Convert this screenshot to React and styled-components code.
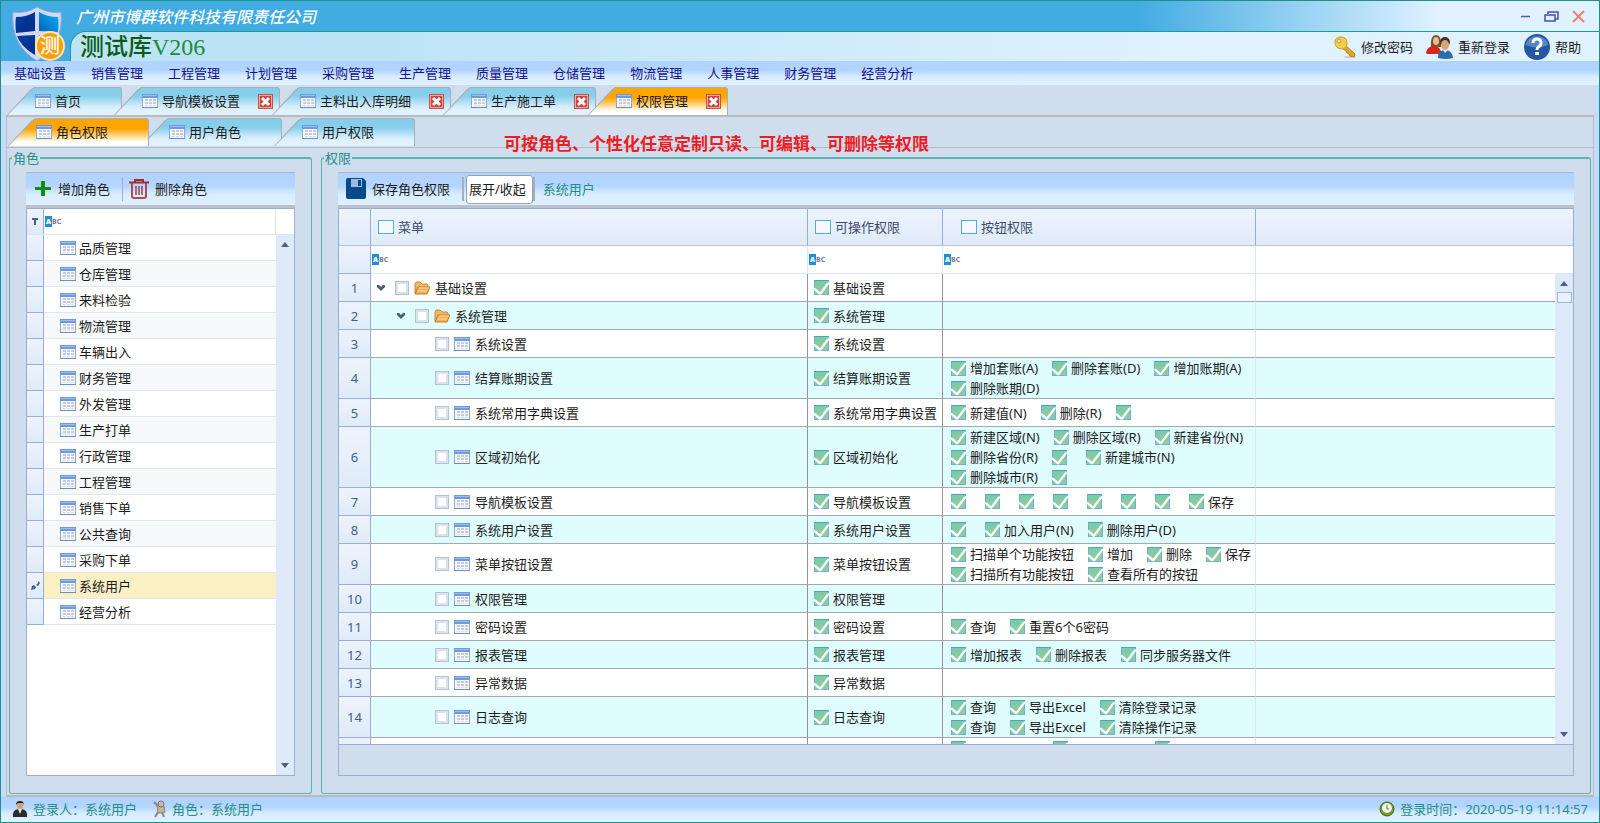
import React from "react";
import styled, { createGlobalStyle, css } from "styled-components";

const menus = [
  "基础设置", "销售管理", "工程管理", "计划管理", "采购管理", "生产管理",
  "质量管理", "仓储管理", "物流管理", "人事管理", "财务管理", "经营分析",
];

const pages = [
  { name: "首页" },
  { name: "导航模板设置", close: true },
  { name: "主料出入库明细", close: true },
  { name: "生产施工单", close: true },
  { name: "权限管理", close: true, active: true },
];

const subPages = [
  { name: "角色权限", active: true },
  { name: "用户角色" },
  { name: "用户权限" },
];

const roles = [
  "品质管理", "仓库管理", "来料检验", "物流管理", "车辆出入",
  "财务管理", "外发管理", "生产打单", "行政管理", "工程管理",
  "销售下单", "公共查询", "采购下单", "系统用户", "经营分析",
];

// 每行 buttons 是二维数组,一行一组按钮
const rows = [
  { name: "基础设置", level: 0, buttons: [] },
  { name: "系统管理", level: 1, buttons: [] },
  { name: "系统设置", level: 2, buttons: [] },
  { name: "结算账期设置", level: 2, buttons: [["增加套账(A)", "删除套账(D)", "增加账期(A)"], ["删除账期(D)"]] },
  { name: "系统常用字典设置", level: 2, buttons: [["新建值(N)", "删除(R)", ""]] },
  {
    name: "区域初始化",
    level: 2,
    buttons: [
      ["新建区域(N)", "删除区域(R)", "新建省份(N)"],
      ["删除省份(R)", "", "新建城市(N)"],
      ["删除城市(R)", ""],
    ],
  },
  { name: "导航模板设置", level: 2, buttons: [["", "", "", "", "", "", "", "保存"]] },
  { name: "系统用户设置", level: 2, buttons: [["", "加入用户(N)", "删除用户(D)"]] },
  {
    name: "菜单按钮设置",
    level: 2,
    buttons: [["扫描单个功能按钮", "增加", "删除", "保存"], ["扫描所有功能按钮", "查看所有的按钮"]],
  },
  { name: "权限管理", level: 2, buttons: [] },
  { name: "密码设置", level: 2, buttons: [["查询", "重置6个6密码"]] },
  { name: "报表管理", level: 2, buttons: [["增加报表", "删除报表", "同步服务器文件"]] },
  { name: "异常数据", level: 2, buttons: [] },
  { name: "日志查询", level: 2, buttons: [["查询", "导出Excel", "清除登录记录"], ["查询", "导出Excel", "清除操作记录"]] },
];

function GridIcon() {
  return (
    <svg width="16" height="14" viewBox="0 0 16 14" aria-hidden="true">
      <rect x="0.5" y="0.5" width="15" height="13" fill="#f4f8fd" stroke="#8fa8d4" />
      <rect x="0" y="0" width="16" height="4" fill="#6d9ade" />
      <rect x="1" y="1" width="14" height="1" fill="#9dbdec" />
      <path d="M3 5h3v2H3zM7 5h3v2H7zM11 5h3v2h-3zM3 8h3v2H3zM7 8h3v2H7zM11 8h3v2h-3z" fill="#c6cbd6" />
      <path d="M3 11h3v1H3zM7 11h3v1H7zM11 11h3v1h-3z" fill="#d9dde6" />
      <path d="M0 13.5h16" stroke="#6a8cc4" />
    </svg>
  );
}

function FolderIcon() {
  return (
    <svg width="16" height="14" viewBox="0 0 16 14" aria-hidden="true">
      <path d="M1 12V3l1-2h4l2 2h5l1 1v3" fill="#f0b868" stroke="#c98630" />
      <path d="M1 13L4 6h12l-3 7z" fill="#f4ae54" stroke="#c47c26" />
      <path d="M5 7h10" stroke="#fbe0b0" />
      <path d="M3 11h9l1-2H4z" fill="#f8c880" />
    </svg>
  );
}

function CloseIcon() {
  return (
    <svg width="15" height="15" viewBox="0 0 15 15" aria-hidden="true">
      <rect x="0.5" y="0.5" width="14" height="14" fill="#f0a8a0" stroke="#c85048" />
      <rect x="2" y="2" width="11" height="11" fill="#c9463f" />
      <path d="M4 4l7 7M11 4l-7 7" stroke="#fff" strokeWidth="3" />
    </svg>
  );
}

function Logo() {
  return (
    <svg width="60" height="58" viewBox="0 0 60 58">
      <defs>
        <linearGradient id="navy" x1="0" y1="0" x2="1" y2="1">
          <stop offset="0" stopColor="#0440a4" />
          <stop offset="1" stopColor="#032a86" />
        </linearGradient>
        <linearGradient id="sky" x1="0" y1="1" x2="1" y2="0">
          <stop offset="0" stopColor="#0560c0" />
          <stop offset="1" stopColor="#08b4ee" />
        </linearGradient>
      </defs>
      <path d="M26 2Q38 9 50 7Q53 40 26 56Q-1 40 2 7Q15 9 26 2z" fill="#cfd8f6" stroke="#8aa4dc" />
      <path d="M24 7v19L5 28Q4 18 5 12Q16 12 24 7z" fill="url(#navy)" />
      <path d="M28 7v19l19 1Q48 18 47 12Q36 12 28 7z" fill="url(#sky)" />
      <path d="M24 30v20Q10 42 6 31z" fill="url(#navy)" />
      <path d="M28 30v20Q42 42 46 31z" fill="url(#navy)" />
      <circle cx="39" cy="41" r="14" fill="#fa9f0a" stroke="#fde6b4" strokeWidth="2" />
      <text x="39" y="48" textAnchor="middle" fontSize="20" fontWeight="500" fill="#fff">测</text>
    </svg>
  );
}

function KeyIcon() {
  return (
    <svg width="24" height="24" viewBox="0 0 24 24" aria-hidden="true">
      <ellipse cx="17" cy="22" rx="6" ry="1" fill="#c3cdd8" />
      <path d="M12 10l10 9-1 3-4-1-1-2-2-1-1-2-4-3z" fill="#e2a822" stroke="#b98416" />
      <path d="M2 7Q2 2 8 2q6 0 6 6t-6 6Q2 13 2 7z" fill="#f5cf4c" stroke="#cf9a20" />
      <circle cx="6" cy="6" r="2" fill="#e0f2ff" stroke="#c89420" />
    </svg>
  );
}

function UsersIcon() {
  return (
    <svg width="28" height="26" viewBox="0 0 28 26" aria-hidden="true">
      <path d="M5 13Q4 1 10 1t5 12z" fill="#7a5230" />
      <ellipse cx="10" cy="7" rx="3" ry="4" fill="#e8bc94" />
      <path d="M0 19Q1 12 8 12t7 8H1z" fill="#d8281e" />
      <circle cx="19" cy="8" r="5" fill="#4a3222" />
      <ellipse cx="19" cy="11" rx="4" ry="5" fill="#d9a478" />
      <path d="M12 24q0-8 7-8t8 8q-7 2-15 0z" fill="#2a6cb0" />
      <path d="M17 16l2 3 3-3z" fill="#dcebf8" />
    </svg>
  );
}

function HelpIcon() {
  return (
    <svg width="28" height="26" viewBox="0 0 28 26" aria-hidden="true">
      <circle cx="14" cy="13" r="13" fill="#2456a4" />
      <path d="M3 11a11 9 0 0 1 22 0q-11 5-22 0z" fill="#5884c4" />
      <path d="M10 9q0-4 4-4t4 4q0 2-2 3.5Q14 13.5 14 16" fill="none" stroke="#fff" strokeWidth="3" />
      <rect x="12" y="18" width="4" height="3" fill="#fff" />
    </svg>
  );
}

function PlusIcon() {
  return (
    <svg width="18" height="18" viewBox="0 0 18 18" aria-hidden="true">
      <path d="M7 1h4v6h6v3h-6v6H7v-6H1V7h6z" fill="#128a14" />
    </svg>
  );
}

function TrashIcon() {
  return (
    <svg width="20" height="20" viewBox="0 0 20 20" aria-hidden="true">
      <path d="M0 3.5h20M6 3V1h8v2" fill="none" stroke="#a52a2a" strokeWidth="2" />
      <path d="M3 4v13q0 2 2 2h10q2 0 2-2V4" fill="none" stroke="#b04a50" strokeWidth="2" />
      <path d="M7 7v9M10 7v9M13 7v9" stroke="#a04050" strokeWidth="1.5" />
    </svg>
  );
}

function SaveIcon() {
  return (
    <svg width="20" height="22" viewBox="0 0 20 22" aria-hidden="true">
      <path d="M2 0h15l3 3v16q0 2-2 2H2q-2 0-2-2V2q0-2 2-2z" fill="#064a8c" />
      <path d="M5 1h11v8H5z" fill="#9dbce4" />
      <path d="M12 2h3v6h-3z" fill="#064a8c" />
    </svg>
  );
}

function PersonIcon() {
  return (
    <svg width="16" height="18" viewBox="0 0 16 18" aria-hidden="true">
      <path d="M1 17q-1-7 5-8h4q6 1 5 8z" fill="#2c2c30" />
      <path d="M6 9l2 5 2-5z" fill="#e8e8e8" />
      <ellipse cx="8" cy="5" rx="3" ry="4" fill="#d0a070" />
      <path d="M4 5Q4 1 8 1t4 4L11 3H6z" fill="#2a2018" />
    </svg>
  );
}

function RoleIcon() {
  return (
    <svg width="14" height="18" viewBox="0 0 14 18" aria-hidden="true">
      <path d="M1 2l4 4M5 12l-3 5M9 12l2 5" fill="none" stroke="#8c8478" strokeWidth="2" />
      <path d="M4 6h7l1 6-3 1H5z" fill="#c0b49c" stroke="#8c8478" />
      <circle cx="8" cy="4" r="3" fill="#cbbba4" stroke="#7c746c" />
    </svg>
  );
}

function ClockIcon() {
  return (
    <svg width="16" height="16" viewBox="0 0 16 16" aria-hidden="true">
      <circle cx="8" cy="8" r="7" fill="#6a9a2c" stroke="#3e6a14" />
      <circle cx="8" cy="7" r="5" fill="#f4f2e4" />
      <path d="M8 4v4h2" fill="none" stroke="#6c7454" />
    </svg>
  );
}

function Arrow({ down }) {
  return (
    <svg width="10" height="6" viewBox="0 0 10 6" aria-hidden="true">
      <path d={down ? "M1 0h8L5 5z" : "M1 6h8L5 1z"} fill="#4c5f86" />
    </svg>
  );
}

function AbcFilter({ label }) {
  return (
    <FilterBox>
      <FilterMark aria-hidden="true">
        <b>A</b>BC
      </FilterMark>
      <FilterInput type="text" aria-label={label} />
    </FilterBox>
  );
}

function TabList({ items }) {
  return items.map((item) => (
    <Tab key={item.name} $active={item.active} $close={item.close}>
      <TabButton type="button">
        <GridIcon />
        {item.name}
      </TabButton>
      {item.close && (
        <TabClose type="button" aria-label={`关闭${item.name}`}>
          <CloseIcon />
        </TabClose>
      )}
    </Tab>
  ));
}

function Columns() {
  return (
    <colgroup>
      <NumberCol />
      <MenuCol />
      <AccessCol />
      <ButtonCol />
      <col />
    </colgroup>
  );
}

function RolePanel() {
  return (
    <Group $narrow>
      <Legend>角色</Legend>
      <Toolbar>
        <ToolButton type="button">
          <PlusIcon />
          增加角色
        </ToolButton>
        <Divider />
        <ToolButton type="button">
          <TrashIcon />
          删除角色
        </ToolButton>
      </Toolbar>
      <GridBox>
        <RoleFilter>
          <RoleMark>
            <svg width="8" height="8" viewBox="0 0 8 8" aria-hidden="true">
              <path d="M1 0h6v2H5v5H3V2H1z" fill="#4c5f86" />
            </svg>
          </RoleMark>
          <AbcFilter label="筛选角色" />
          <FilterEnd />
        </RoleFilter>
        <GridBody>
          <GridView>
            <RoleTable>
              <tbody>
                {roles.map((role, i) => (
                  <RoleRow key={role} $odd={i % 2 === 1} $selected={role === "系统用户"}>
                    <td>
                      {role === "系统用户" && (
                        <svg width="9" height="9" viewBox="0 0 9 9" aria-hidden="true">
                          <path d="M0 9l1-4 2-1 2 2-1 2zM5 4l2-2V0l2 2-2 3z" fill="#4c5f86" />
                        </svg>
                      )}
                    </td>
                    <td>
                      <RoleName>
                        <GridIcon />
                        {role}
                      </RoleName>
                    </td>
                  </RoleRow>
                ))}
              </tbody>
            </RoleTable>
          </GridView>
          <ScrollBar>
            <Arrow />
            <Arrow down />
          </ScrollBar>
        </GridBody>
      </GridBox>
    </Group>
  );
}

function PermissionPanel() {
  return (
    <Group>
      <Legend>权限</Legend>
      <Toolbar>
        <ToolButton type="button">
          <SaveIcon />
          保存角色权限
        </ToolButton>
        <Divider $thick />
        <ToggleButton type="button">展开/收起</ToggleButton>
        <Divider $thick />
        <CurrentRole>系统用户</CurrentRole>
      </Toolbar>
      <GridBox>
        <HeadTable>
          <Columns />
          <thead>
            <tr>
              <th />
              <th><HeadLabel><HeadCheck type="checkbox" />菜单</HeadLabel></th>
              <th><HeadLabel><HeadCheck type="checkbox" />可操作权限</HeadLabel></th>
              <th><HeadLabel $indent><HeadCheck type="checkbox" />按钮权限</HeadLabel></th>
              <th />
            </tr>
          </thead>
          <tbody>
            <tr>
              <td />
              <td><AbcFilter label="筛选菜单" /></td>
              <td><AbcFilter label="筛选可操作权限" /></td>
              <td><AbcFilter label="筛选按钮权限" /></td>
              <td />
            </tr>
          </tbody>
        </HeadTable>
        <GridBody>
          <GridView>
            <BodyTable>
              <Columns />
              <tbody>
                {rows.map((row, i) => (
                  <BodyRow key={row.name} $even={i % 2 === 1}>
                    <td>{i + 1}</td>
                    <td>
                      <TreeCell $level={row.level}>
                        <Expander>
                          {row.level < 2 && (
                            <svg width="8" height="6" viewBox="0 0 8 6" aria-hidden="true">
                              <path d="M0 0h2l2 2 2-2h2v2L4 6 0 2z" fill="#4a5a78" />
                            </svg>
                          )}
                        </Expander>
                        <label>
                          <TreeCheck type="checkbox" />
                          {row.level < 2 ? <FolderIcon /> : <GridIcon />}
                          {row.name}
                        </label>
                      </TreeCell>
                    </td>
                    <td>
                      <CheckLine>
                        <CheckLabel>
                          <CheckBox type="checkbox" defaultChecked />
                          {row.name}
                        </CheckLabel>
                      </CheckLine>
                    </td>
                    <td>
                      {row.buttons.map((line, n) => (
                        <CheckLine key={n} $inner>
                          {line.map((text, k) => (
                            <CheckLabel key={k}>
                              <CheckBox type="checkbox" defaultChecked aria-label={text || "按钮"} />
                              {text}
                            </CheckLabel>
                          ))}
                        </CheckLine>
                      ))}
                    </td>
                    <td />
                  </BodyRow>
                ))}
                <BodyRow>
                  <td />
                  <td />
                  <td />
                  <td>
                    <CheckLine $inner>
                      <CheckLabel $wide><CheckBox type="checkbox" defaultChecked aria-label="按钮" /></CheckLabel>
                      <CheckLabel $wide><CheckBox type="checkbox" defaultChecked aria-label="按钮" /></CheckLabel>
                      <CheckLabel $wide><CheckBox type="checkbox" defaultChecked aria-label="按钮" /></CheckLabel>
                    </CheckLine>
                    <CheckLine $inner />
                  </td>
                  <td />
                </BodyRow>
              </tbody>
            </BodyTable>
          </GridView>
          <ScrollBar>
            <div>
              <Arrow />
              <Thumb />
            </div>
            <Arrow down />
          </ScrollBar>
        </GridBody>
        <GridFooter />
      </GridBox>
    </Group>
  );
}

function App() {
  return (
    <Window>
      <GlobalStyle />
      <Header>
        <LogoBox>
          <Logo />
        </LogoBox>
        <HeaderMain>
          <TitleBar>
            <Company>广州市博群软件科技有限责任公司</Company>
            <WindowButtons>
              <button type="button" aria-label="最小化">
                <svg width="10" height="14" viewBox="0 0 10 14"><path d="M0 6.5h9" stroke="#4a5ac0" strokeWidth="1.5" /></svg>
              </button>
              <button type="button" aria-label="还原">
                <svg width="15" height="14" viewBox="0 0 15 14">
                  <path d="M4 4V2h10v7h-3M1 5h10v6H1z" fill="none" stroke="#4a4eb0" strokeWidth="1.5" />
                </svg>
              </button>
              <button type="button" aria-label="关闭">
                <svg width="13" height="14" viewBox="0 0 13 14"><path d="M1 1l11 11M12 1L1 12" stroke="#f0806c" strokeWidth="2" /></svg>
              </button>
            </WindowButtons>
          </TitleBar>
          <BrandBar>
            <Product>
              测试库<span>V206</span>
            </Product>
            <UserTools>
              <button type="button"><KeyIcon />修改密码</button>
              <button type="button"><UsersIcon />重新登录</button>
              <button type="button"><HelpIcon />帮助</button>
            </UserTools>
          </BrandBar>
        </HeaderMain>
      </Header>
      <MenuBar>
        {menus.map((name) => (
          <button type="button" key={name}>{name}</button>
        ))}
      </MenuBar>
      <Content>
        <TabStrip>
          <TabList items={pages} />
        </TabStrip>
        <Frame>
          <TabStrip $line>
            <TabList items={subPages} />
          </TabStrip>
          <Note>可按角色、个性化任意定制只读、可编辑、可删除等权限</Note>
          <Groups>
            <RolePanel />
            <PermissionPanel />
          </Groups>
        </Frame>
      </Content>
      <StatusBar>
        <StatusItem><PersonIcon />登录人：系统用户</StatusItem>
        <StatusItem><RoleIcon />角色：系统用户</StatusItem>
        <StatusItem $right><ClockIcon />登录时间：2020-05-19 11:14:57</StatusItem>
      </StatusBar>
    </Window>
  );
}

const barFill = "linear-gradient(#b0d2ff 0%, #b4d5ff 40%, #d8ecff 65%, #e0f2ff 100%)";
const cellFill = "linear-gradient(#edf3fc, #dfebf9)";

const GlobalStyle = createGlobalStyle`
  * {
    box-sizing: border-box;
  }
  body {
    margin: 0;
    font-family: "Noto Sans", "Noto Sans CJK SC", sans-serif;
    font-size: 13px;
    line-height: 20px;
    color: #1c1c1c;
  }
  button, input {
    margin: 0;
    padding: 0;
    border: 0;
    background: none;
    font: inherit;
    color: inherit;
  }
  button {
    display: flex;
    align-items: center;
    white-space: nowrap;
  }
  svg {
    display: block;
    flex: none;
  }
  table {
    width: 100%;
    border-collapse: separate;
    border-spacing: 0;
    table-layout: fixed;
  }
  th, td {
    padding: 0;
    font-weight: 400;
    text-align: left;
  }
`;

const Window = styled.div`
  display: flex;
  flex-direction: column;
  height: 100vh;
  border: 1px solid #1f8f88;
  background: #c4dcfa;
  overflow: hidden;
`;

const Header = styled.header`
  display: flex;
  flex: none;
  background: linear-gradient(90deg, #41abe2 71%, #e0f2ff 90%);
`;

const LogoBox = styled.div`
  width: 69px;
  height: 60px;
  padding: 4px 0 0 10px;
  overflow: hidden;
`;

const HeaderMain = styled.div`
  flex: 1;
`;

const TitleBar = styled.div`
  display: flex;
  align-items: center;
  justify-content: space-between;
  height: 30px;
  padding: 2px 14px 0 6px;
`;

const Company = styled.div`
  font-size: 16px;
  font-style: italic;
  font-weight: 500;
  color: #fff;
`;

const WindowButtons = styled.div`
  display: flex;
  gap: 13px;
`;

const BrandBar = styled.div`
  display: flex;
  align-items: center;
  justify-content: space-between;
  height: 30px;
  padding: 0 18px 0 9px;
  border-top: 1px solid #1f9a90;
  border-left: 1px solid #1f9a90;
  border-top-left-radius: 16px;
  background: linear-gradient(90deg, #bce4f6 20%, #e0f2ff 75%);
`;

const Product = styled.div`
  font-size: 24px;
  font-weight: 500;
  line-height: 28px;
  color: #0a5c14;

  span {
    font-family: "Liberation Serif", serif;
    font-weight: 400;
    color: #1c8a3c;
  }
`;

const UserTools = styled.div`
  display: flex;
  gap: 13px;

  button {
    gap: 4px;
  }
`;

const MenuBar = styled.nav`
  display: flex;
  flex: none;
  gap: 25px;
  height: 24px;
  padding-left: 13px;
  background: ${barFill};
  color: #14148c;
`;

const Content = styled.div`
  display: flex;
  flex: 1;
  flex-direction: column;
  min-height: 0;
  margin: 0 5px;
  background: #d0dded;
`;

const TabStrip = styled.div`
  display: flex;
  flex: none;
  height: ${(props) => (props.$line ? "31px" : "30px")};
  padding: ${(props) => (props.$line ? "1px 0 0 1px" : "2px 0 0 1px")};
  ${(props) => props.$line && css`border-bottom: 1px solid #b4bac4;`}
`;

const slant = "polygon(0 100%, 23px 3px, 27px 0, calc(100% - 2px) 0, 100% 2px, 100% 100%)";

const Tab = styled.div`
  position: relative;
  z-index: ${(props) => (props.$active ? 1 : 0)};
  display: flex;
  align-items: center;
  isolation: isolate;
  height: 28px;
  margin-right: -8px;
  padding: 0 ${(props) => (props.$close ? "7px" : "41px")} 0 28px;
  background: #a4b0bc;
  clip-path: ${slant};

  &::before {
    content: "";
    position: absolute;
    inset: 1px 1px 0 1px;
    z-index: -1;
    clip-path: ${slant};
    background: ${(props) =>
      props.$active
        ? "linear-gradient(#ffa500 35%, #ffe0a0 68%, #fff 85%)"
        : "linear-gradient(#87ceeb 30%, #d4ecfa 68%, #e0f2ff 85%)"};
  }
`;

const TabButton = styled.button`
  gap: 4px;
`;

const TabClose = styled.button`
  margin-left: 18px;
`;

const Frame = styled.main`
  position: relative;
  display: flex;
  flex: 1;
  flex-direction: column;
  min-height: 0;
  border: 1px solid #b8babf;
  border-width: 2px 1px;
`;

/* 红色说明文字压在页签下边线上 */
const Note = styled.div`
  position: absolute;
  top: 15px;
  left: 497px;
  font-size: 17px;
  font-weight: 700;
  line-height: 24px;
  white-space: nowrap;
  color: #ee1c24;
`;

const Groups = styled.div`
  display: flex;
  flex: 1;
  gap: 9px;
  min-height: 0;
  padding: 0 2px 1px;
`;

const Group = styled.fieldset`
  display: flex;
  flex: ${(props) => (props.$narrow ? "0 0 303px" : "1")};
  flex-direction: column;
  min-width: 0;
  margin: 0;
  padding: 4px 16px 17px;
  border: 1px solid #5fb3ac;
  border-top-width: 2px;
  border-radius: 3px;
`;

const Legend = styled.legend`
  margin-left: -14px;
  padding: 0 1px;
  color: #1f8f88;
`;

const Toolbar = styled.div`
  display: flex;
  flex: none;
  align-items: center;
  height: 36px;
  padding: 0 8px;
  border-top: 1px solid #a9b8cc;
  border-bottom: 3px solid #b9c1cc;
  background: ${barFill};
`;

const ToolButton = styled.button`
  gap: 6px;
`;

const Divider = styled.span`
  flex: none;
  width: ${(props) => (props.$thick ? "2px" : "1px")};
  height: 24px;
  margin: ${(props) => (props.$thick ? "0 2px 0 12px" : "0 6px 0 12px")};
  background: #a4b0c0;
`;

const ToggleButton = styled.button`
  height: 29px;
  padding: 0 6px 0 2px;
  border: 1px solid #9aa2ac;
  border-radius: 3px;
  background: #fff;

  & + ${Divider} {
    margin: 0 8px 0 0;
  }
`;

const CurrentRole = styled.span`
  color: #1f8f88;
`;

const GridBox = styled.div`
  display: flex;
  flex: 1;
  flex-direction: column;
  min-height: 0;
  border: 1px solid #96afd2;
`;

const GridBody = styled.div`
  display: flex;
  flex: 1;
  min-height: 0;
  background: #fff;
`;

const GridView = styled.div`
  flex: 1;
  min-width: 0;
  overflow: hidden;
`;

const GridFooter = styled.div`
  flex: none;
  height: 31px;
  border-top: 1px solid #96afd2;
  background: #d0dded;
`;

const ScrollBar = styled.div`
  display: flex;
  flex: none;
  flex-direction: column;
  align-items: center;
  justify-content: space-between;
  width: 18px;
  padding: 6px 0;
  background: #deeafa;

  div {
    display: flex;
    flex-direction: column;
    align-items: center;
    gap: 6px;
  }
`;

const Thumb = styled.span`
  width: 15px;
  height: 11px;
  border: 1px solid #9db8dc;
  background: #e9f2fd;
`;

const FilterBox = styled.div`
  display: flex;
  flex: 1;
  align-items: center;
  min-width: 0;
  padding-left: 1px;
`;

const FilterMark = styled.span`
  display: flex;
  flex: none;
  font-size: 7px;
  font-weight: 700;
  line-height: 11px;
  color: #707a94;

  b {
    width: 7px;
    background: #1f8fd4;
    text-align: center;
    color: #fff;
  }
`;

const FilterInput = styled.input`
  flex: 1;
  min-width: 0;
  height: 20px;
  padding: 0 4px;
  outline: 0;
`;

const RoleFilter = styled.div`
  display: flex;
  flex: none;
  height: 26px;
  border-bottom: 1px solid #dde5f0;
  background: #fff;
`;

const RoleMark = styled.div`
  display: flex;
  align-items: center;
  justify-content: center;
  width: 17px;
  border-right: 1px solid #96afd2;
  background: ${cellFill};
`;

const FilterEnd = styled.div`
  width: 19px;
  border-left: 1px solid #dde5f0;
`;

const RoleTable = styled.table`
  td:first-child {
    width: 17px;
    border-right: 1px solid #96afd2;
    border-bottom: 1px solid #96afd2;
    background: ${cellFill};
  }
  td:first-child svg {
    margin: 0 auto;
  }
`;

const RoleRow = styled.tr`
  height: 26px;
  background: ${(props) => (props.$selected ? "#fbefc4" : props.$odd ? "#f6f8fa" : "#fff")};

  td {
    border-bottom: 1px solid #dfe6ee;
  }
`;

const RoleName = styled.div`
  display: flex;
  align-items: center;
  gap: 3px;
  padding-left: 16px;
`;

const NumberCol = styled.col`
  width: 32px;
`;

const MenuCol = styled.col`
  width: 437px;
`;

const AccessCol = styled.col`
  width: 135px;
`;

const ButtonCol = styled.col`
  width: 313px;
`;

const HeadTable = styled.table`
  flex: none;
  background: #fff;

  th {
    height: 37px;
    border-right: 1px solid #96afd2;
    border-bottom: 1px solid #b4c4e0;
    background: ${cellFill};
    color: #3c4c6c;
  }
  td {
    height: 28px;
    border-right: 1px solid #dde5f0;
    border-bottom: 1px solid #dde5f0;
  }
  td:first-child {
    border-color: #96afd2;
    background: ${cellFill};
  }
  th:last-child, td:last-child {
    border-right: 0;
  }
`;

const HeadLabel = styled.label`
  display: flex;
  align-items: center;
  gap: 4px;
  padding-left: ${(props) => (props.$indent ? "18px" : "7px")};
`;

const HeadCheck = styled.input`
  appearance: none;
  width: 16px;
  height: 14px;
  border: 1px solid #48b4dc;
  background: #f4fafe;
`;

const BodyTable = styled.table`
  td {
    height: 28px;
    border-right: 1px solid #949494;
    border-bottom: 1px solid #a4a8a8;
  }
  td:first-child {
    border-color: #96afd2;
    background: ${cellFill};
    text-align: center;
    color: #40608c;
  }
  td:nth-child(4) {
    border-right-color: #dde5f0;
  }
  td:last-child {
    border-right: 0;
  }
`;

const BodyRow = styled.tr`
  background: ${(props) => (props.$even ? "#dffdff" : "#fff")};
`;

const TreeCell = styled.div`
  display: flex;
  align-items: center;
  padding-left: ${(props) => props.$level * 20}px;

  label {
    display: flex;
    align-items: center;
    gap: 5px;
  }
`;

const Expander = styled.span`
  display: flex;
  justify-content: center;
  width: 20px;
  margin-right: 4px;
`;

const TreeCheck = styled.input`
  appearance: none;
  width: 14px;
  height: 14px;
  border: 1px solid #b0c2de;
  background: #fff;
  box-shadow: inset 0 0 0 2px #dde3ec;
`;

const CheckLine = styled.div`
  display: flex;
  align-items: center;
  gap: 14px;
  height: 20px;
  padding-left: ${(props) => (props.$inner ? "8px" : "6px")};
  white-space: nowrap;
`;

const CheckLabel = styled.label`
  display: flex;
  align-items: center;
  gap: 4px;
  min-width: ${(props) => (props.$wide ? "88px" : "20px")};
`;

const CheckBox = styled.input`
  appearance: none;
  position: relative;
  width: 15px;
  height: 15px;
  border: 1px solid #68b4d8;
  border-top-color: #4aa4c8;
  background: linear-gradient(#78cca4, #98c8a0);

  &::after {
    content: "";
    position: absolute;
    inset: -1px;
    background: #fff;
    clip-path: polygon(0 53%, 12% 56%, 40% 82%, 86% 20%, 100% 14%, 100% 26%, 46% 98%, 36% 98%, 0 66%);
  }
`;

const StatusBar = styled.footer`
  display: flex;
  flex: none;
  align-items: center;
  gap: 16px;
  height: 25px;
  padding: 0 11px 2px;
  background: ${barFill};
  color: #1f8f88;
`;

const StatusItem = styled.div`
  display: flex;
  align-items: center;
  gap: 5px;
  ${(props) => props.$right && css`margin-left: auto;`}
`;

export default App;
